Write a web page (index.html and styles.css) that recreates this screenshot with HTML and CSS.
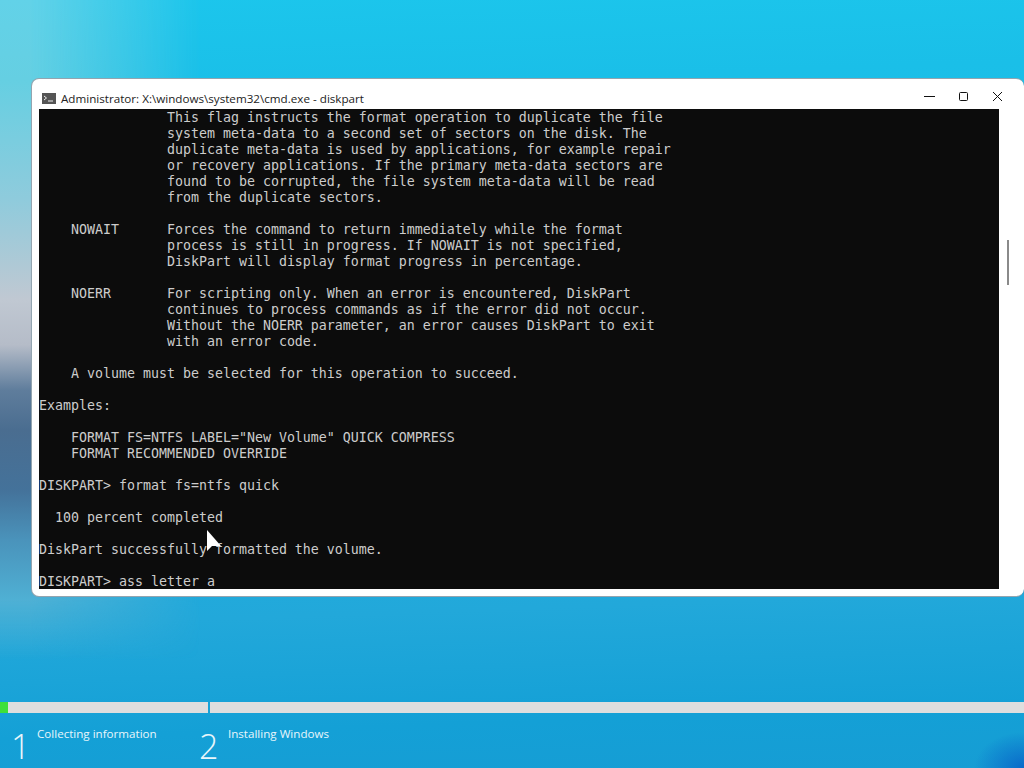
FILE: index.html
```
<!DOCTYPE html>
<html lang="en">
<head>
<meta charset="utf-8">
<title>Administrator: X:\windows\system32\cmd.exe - diskpart</title>
<link rel="stylesheet" href="styles.css">
</head>
<body>
<div class="desktop">
  <section class="window">
    <header class="titlebar">
      <svg class="app-icon" width="14" height="11" viewBox="0 0 14 11"><rect width="14" height="11" fill="#555"/><path d="M2 3l2.5 2L2 7" fill="none" stroke="#eee" stroke-width="1"/><path d="M6 8h5" stroke="#eee" stroke-width="1"/></svg>
      <span class="title">Administrator: X:\windows\system32\cmd.exe - diskpart</span>
      <div class="controls">
        <svg class="ctl" width="12" height="12" viewBox="0 0 12 12"><path d="M0 5.5h11" stroke="#111" stroke-width="1"/></svg>
        <svg class="ctl" width="12" height="12" viewBox="0 0 12 12"><rect x="1.5" y="1.5" width="8" height="8" rx="1" fill="none" stroke="#111" stroke-width="1"/></svg>
        <svg class="ctl" width="12" height="12" viewBox="0 0 12 12"><path d="M1 1l9 9M10 1l-9 9" stroke="#111" stroke-width="1"/></svg>
      </div>
    </header>
    <div class="content">
      <pre class="console">                This flag instructs the format operation to duplicate the file
                system meta-data to a second set of sectors on the disk. The
                duplicate meta-data is used by applications, for example repair
                or recovery applications. If the primary meta-data sectors are
                found to be corrupted, the file system meta-data will be read
                from the duplicate sectors.

    NOWAIT      Forces the command to return immediately while the format
                process is still in progress. If NOWAIT is not specified,
                DiskPart will display format progress in percentage.

    NOERR       For scripting only. When an error is encountered, DiskPart
                continues to process commands as if the error did not occur.
                Without the NOERR parameter, an error causes DiskPart to exit
                with an error code.

    A volume must be selected for this operation to succeed.

Examples:

    FORMAT FS=NTFS LABEL="New Volume" QUICK COMPRESS
    FORMAT RECOMMENDED OVERRIDE

DISKPART&gt; format fs=ntfs quick

  100 percent completed

DiskPart successfully formatted the volume.

DISKPART&gt; ass letter a</pre>
      <div class="scrollbar"><div class="thumb"></div></div>
    </div>
  </section>
  <svg class="cursor" width="16" height="24" viewBox="0 0 16 24"><path d="M1 1v21l5-5h9z" fill="#fff"/></svg>
  <footer class="setup">
    <div class="progress">
      <div class="seg seg-one"><div class="fill"></div></div>
      <div class="seg seg-two"></div>
    </div>
    <div class="steps">
      <div class="step step-one"><span class="num">1</span><span class="label">Collecting information</span></div>
      <div class="step step-two"><span class="num">2</span><span class="label">Installing Windows</span></div>
    </div>
  </footer>
</div>
</body>
</html>
```
FILE: styles.css
```
* { box-sizing: border-box; }
html, body { margin: 0; height: 100%; }
body { overflow: hidden; }
.desktop {
  position: relative;
  width: 1024px; height: 768px;
  display: flex; flex-direction: column;
  padding-top: 78px;
  background:
    radial-gradient(ellipse 50px 36px at 1024px 768px, rgba(8,100,200,.9), rgba(8,110,200,0) 100%),
    linear-gradient(178deg, #1cc6ec 0%, #1abfe8 12%, #1db9e5 40%, #22a8da 78%, #14a0d6 92%, #169dd4 100%);
  font-family: "Open Sans", "Noto Sans", sans-serif;
}
.desktop::before {
  content: "";
  position: absolute;
  left: 0; top: 0;
  width: 200px; height: 660px;
  background: linear-gradient(180deg,
    #62d2e8 0, #65cfe2 80px, #8fcbdc 200px, #c0c8d2 300px, #b5bcc8 345px,
    #5f7d9c 390px, #4a6d90 430px, #44729a 490px, #4a93bb 540px, #4fb0d4 600px, rgba(60,175,215,0) 660px);
  -webkit-mask-image: linear-gradient(90deg, #000 0, #000 30px, transparent 200px);
  mask-image: linear-gradient(90deg, #000 0, #000 30px, transparent 200px);
}
.window {
  position: relative;
  margin-left: 31px;
  width: 993px; height: 519px;
  background: #fff;
  border-radius: 8px;
  border: 1px solid rgba(60,90,110,.55);
  border-width: 1px 0 1px 1px;
  display: flex; flex-direction: column;
}
.titlebar {
  height: 30px;
  display: flex; align-items: center;
  padding: 8px 0 0 10px;
  color: #222;
}
.app-icon { margin-right: 5px; }
.title { font-family: "Open Sans", sans-serif; font-size: 11.65px; }
.controls { margin: 0 20px 2px auto; display: flex; gap: 22px; }
.content { display: flex; padding-left: 7px; }
.console {
  margin: 0;
  padding-top: 1px;
  width: 960px; height: 480px;
  background: #0c0c0c; color: #cccccc;
  font-family: "DejaVu Sans Mono", monospace;
  font-size: 13.29px; line-height: 16px;
  overflow: hidden;
}
.scrollbar { width: 25px; height: 480px; padding: 131px 0 0 8px; }
.thumb { width: 2px; height: 45px; background: #8a8a8a; }
.cursor { position: absolute; left: 206px; top: 529px; }
.setup { position: relative; margin-top: auto; color: #e8f6fb; }
.progress { display: flex; height: 11px; gap: 2px; }
.seg { background: #dedede; height: 11px; }
.seg-one { width: 208px; }
.seg-two { flex: 1; }
.fill { width: 8px; height: 11px; background: #3fe03a; }
.steps { display: flex; height: 55px; padding-left: 11px; }
.step { display: flex; align-items: flex-start; }
.step-one { width: 188px; }
.num { font-size: 34px; font-weight: 300; line-height: 40px; width: 26px; margin-top: 13px; font-family: "Open Sans", sans-serif; }
.step-two .num { width: 29px; }
.label { font-size: 11.6px; line-height: 16px; margin-top: 13px; }
```
